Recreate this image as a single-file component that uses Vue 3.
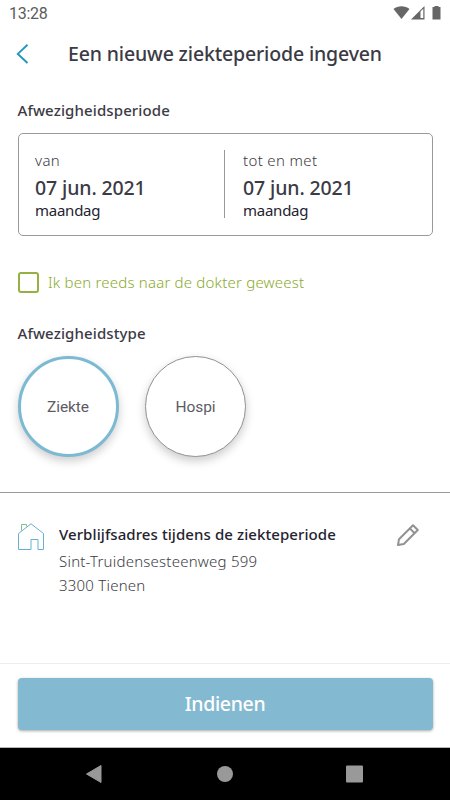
<script setup>
import { ref } from 'vue'

const dokter = ref(false)
const type = ref('Ziekte')
const types = ['Ziekte', 'Hospi']
const periode = [
  { label: 'van', datum: '07 jun. 2021', dag: 'maandag', cls: 'van' },
  { label: 'tot en met', datum: '07 jun. 2021', dag: 'maandag', cls: 'tot' }
]
</script>

<template>
  <div class="screen">
    <div class="status">
      <span class="time">13:28</span>
      <svg class="status-icons" width="50" height="16" viewBox="0 0 50 16">
        <path d="M1.500 4C6 .2 13 .2 17.500 4L9.500 14Z" fill="#666" />
        <path d="M19 14.500L32.500 1V14.500Z" fill="#666" />
        <path d="M28.500 6.500L31.300 3.700V13H28.500Z" fill="#fff" />
        <path d="M40.500 2h2V1h4V2h2v12.500h-8z" fill="#666" />
      </svg>
    </div>

    <header class="header">
      <svg class="back" width="14" height="20" viewBox="0 0 14 20">
        <path d="M11.500 .8L1.800 9.900L11.500 19" fill="none" stroke="#2595bb" stroke-width="1.900" />
      </svg>
      <h1>Een nieuwe ziekteperiode ingeven</h1>
    </header>

    <main class="content">
      <h2 class="kop-periode">Afwezigheidsperiode</h2>
      <div class="periode">
        <div v-for="p in periode" :key="p.cls" class="deel" :class="p.cls">
          <div class="label">{{ p.label }}</div>
          <div class="datum">{{ p.datum }}</div>
          <div class="dag">{{ p.dag }}</div>
        </div>
      </div>

      <div class="check" @click="dokter = !dokter">
        <span class="box" :class="{ aan: dokter }"></span>
        <span class="check-text">Ik ben reeds naar de dokter geweest</span>
      </div>

      <h2 class="kop-type">Afwezigheidstype</h2>
      <div class="types">
        <button v-for="t in types" :key="t" class="cirkel" :class="{ actief: t === type }" @click="type = t">{{ t }}</button>
      </div>
    </main>

    <section class="adres">
      <svg class="huis" width="27" height="28" viewBox="0 0 27 28">
        <path d="M3.500 7.500V1.500H8.500V3.500" fill="none" stroke="#86bd86" />
        <path d="M.5 10.500L13 .8L25.500 10.500V26.500H20V16.500H13V26.500H.5Z" fill="none" stroke="#67b0d0" />
      </svg>
      <div class="adres-text">
        <h3>Verblijfsadres tijdens de ziekteperiode</h3>
        <div class="straat">Sint-Truidensesteenweg 599</div>
        <div class="plaats">3300 Tienen</div>
      </div>
      <svg class="pen" width="24" height="24" viewBox="0 0 24 24">
        <path d="M2 22L3 16.200L17 2.200L21.800 7L7.800 21ZM13.800 5.400L18.600 10.200" fill="none" stroke="#929292" stroke-width="2" stroke-linejoin="round" />
      </svg>
    </section>

    <footer class="footer">
      <button class="indienen">Indienen</button>
    </footer>

    <nav class="nav">
      <svg width="450" height="52" viewBox="0 0 450 52">
        <path d="M86.500 26L101 17.500V34.500Z" fill="#999" stroke="#999" stroke-linejoin="round" />
        <circle cx="225" cy="26" r="8" fill="#999" />
        <rect x="346" y="17.500" width="17" height="17" rx="1" fill="#999" />
      </svg>
    </nav>
  </div>
</template>

<style>
body {
  margin: 0;
  background: #fff;
}
</style>

<style scoped>
.screen {
  width: 450px;
  height: 800px;
  display: flex;
  flex-direction: column;
  overflow: hidden;
  background: #fff;
  color: #3b3a45;
  font-family: "Noto Sans", "Open Sans", sans-serif;
  font-size: 15px;
  line-height: 20px;
  white-space: nowrap;
}
h1, h2, h3 {
  margin: 0;
  font-weight: 500;
}
button {
  padding: 0;
  font: inherit;
  color: inherit;
}
.status {
  height: 28px;
  display: flex;
  justify-content: space-between;
  box-sizing: border-box;
  padding: 4px 8px 0 9px;
}
.time {
  font: 16px/20px Roboto, sans-serif;
  color: #5c5c5c;
  letter-spacing: -0.3px;
}
.status-icons {
  margin-top: 1px;
}
.header {
  height: 52px;
  display: flex;
  align-items: center;
  padding-left: 16px;
}
h1 {
  margin-left: 38px;
  font-size: 19.5px;
  line-height: 24px;
  letter-spacing: -0.15px;
}
.content {
  height: 412px;
  padding: 20px 17.5px 0;
  box-sizing: border-box;
}
h2 {
  font-size: 15px;
  line-height: 20px;
  letter-spacing: 0.11px;
}
.periode {
  height: 103px;
  margin: 13px 0 0;
  box-sizing: border-box;
  border: 1px solid #999;
  border-radius: 5px;
  display: flex;
  padding: 16px 0 0 16.5px;
}
.deel {
  height: 68px;
  box-sizing: border-box;
}
.van {
  width: 190px;
  border-right: 1px solid #999;
}
.tot {
  padding-left: 18px;
}
.label {
  font-weight: 300;
  line-height: 20px;
  letter-spacing: 0.35px;
}
.datum {
  margin-top: 6px;
  font-size: 19.5px;
  font-weight: 500;
  line-height: 24px;
  letter-spacing: -0.12px;
}
.dag {
  line-height: 20px;
  letter-spacing: -0.25px;
  color: #24232f;
}
.check {
  display: flex;
  align-items: center;
  gap: 9.5px;
  height: 20px;
  margin-top: 36px;
  color: #8aaa2e;
}
.box {
  width: 21px;
  height: 21px;
  box-sizing: border-box;
  border: 2px solid #95b144;
  border-radius: 3px;
}
.box.aan {
  background: #95b144;
}
.check-text {
  font-weight: 300;
  letter-spacing: 0.2px;
}
.kop-type {
  margin-top: 31px;
}
.types {
  display: flex;
  gap: 26.5px;
  margin-top: 13px;
}
.cirkel {
  width: 101px;
  height: 101px;
  box-sizing: border-box;
  border: 1px solid #919191;
  border-radius: 50%;
  background: #fff;
  box-shadow: 0 4px 10px rgba(0, 0, 0, .2);
  font: 15.5px/20px Roboto, sans-serif;
  letter-spacing: -0.1px;
  color: #5c5b64;
}
.cirkel.actief {
  border: 3px solid #7cb9d2;
}
.adres {
  height: 171px;
  box-sizing: border-box;
  border-top: 1px solid #999;
  display: flex;
  padding: 31px 30px 0 18px;
}
.huis, .pen {
  margin-top: -1px;
}
.adres-text {
  flex: 1;
  margin-left: 14px;
}
h3 {
  font-size: 15px;
  line-height: 20px;
  letter-spacing: 0.08px;
  color: #24232f;
}
.straat, .plaats {
  font-weight: 300;
  line-height: 24px;
  letter-spacing: 0.22px;
}
.straat {
  margin-top: 5px;
}
.footer {
  height: 85px;
  box-sizing: border-box;
  border-top: 1px solid #ededed;
  border-bottom: 1px solid #b5b5b5;
  padding: 14px 17.5px 0;
}
.indienen {
  width: 100%;
  height: 52px;
  border: 0;
  border-radius: 4px;
  background: #83b9d1;
  box-shadow: 0 1px 3px rgba(0, 0, 0, .35);
  color: #fff;
  font-size: 19.5px;
  font-weight: 500;
  letter-spacing: -0.35px;
}
.nav {
  height: 52px;
  background: #000;
}
.nav svg {
  display: block;
}
</style>
